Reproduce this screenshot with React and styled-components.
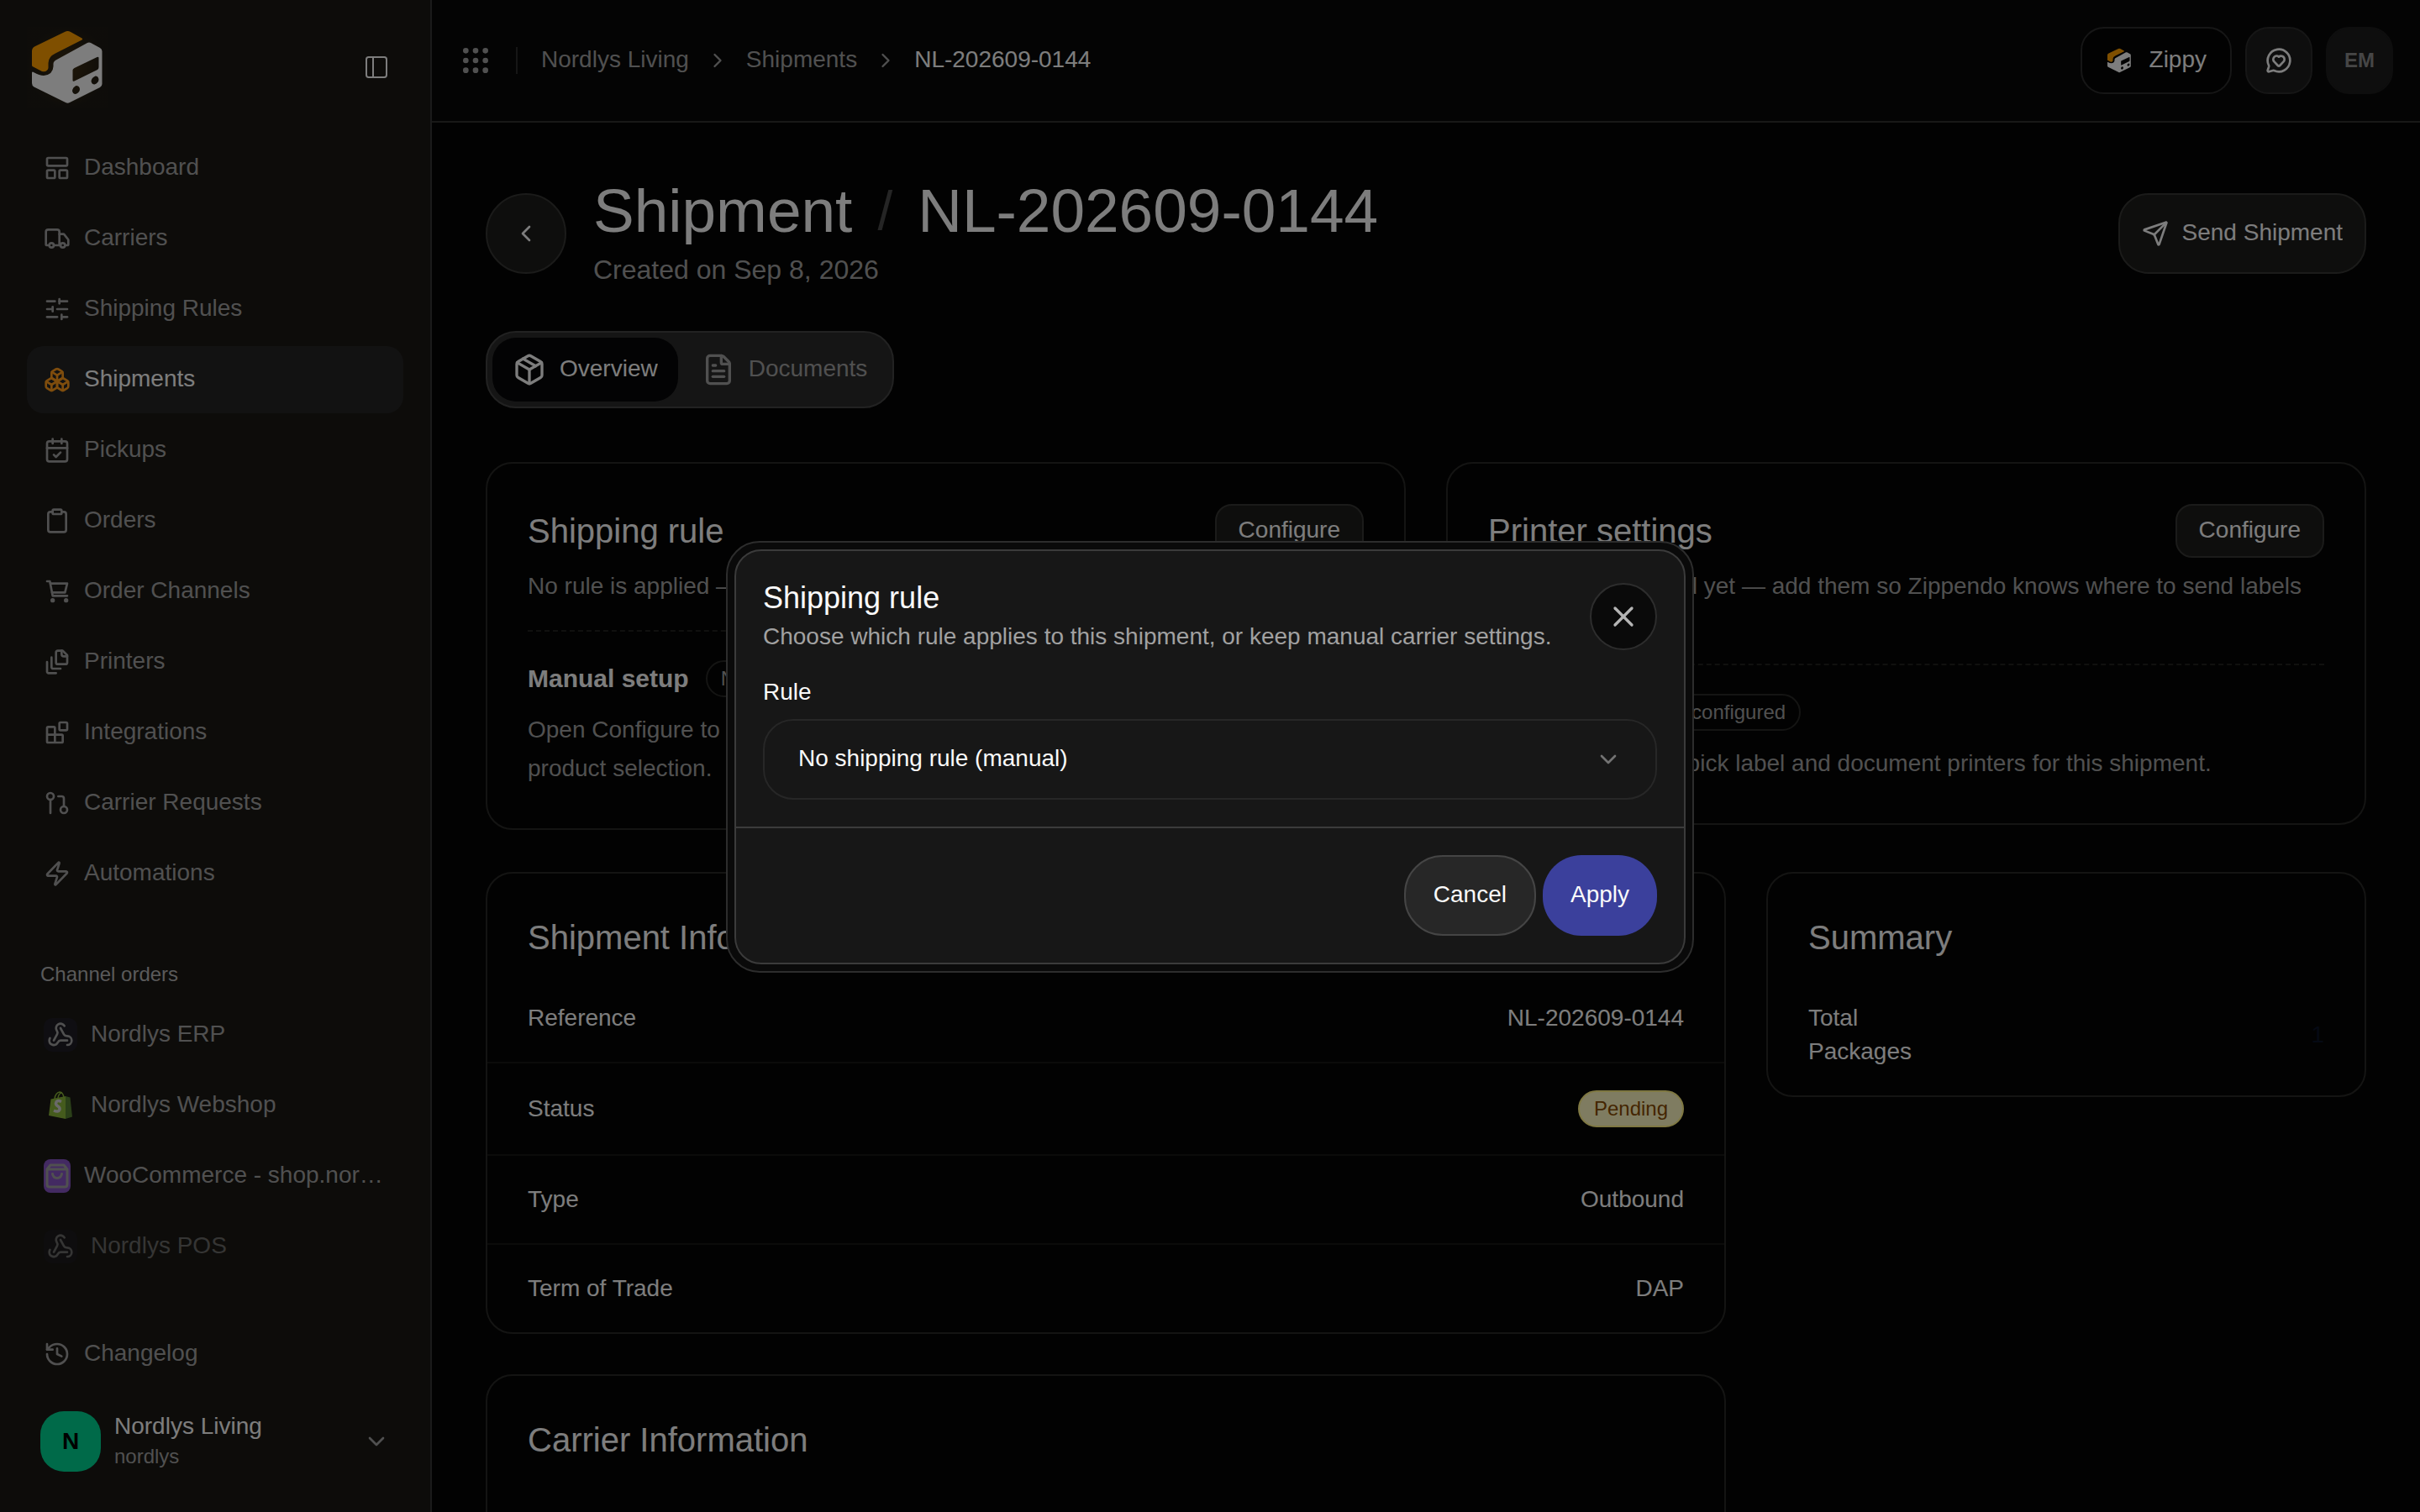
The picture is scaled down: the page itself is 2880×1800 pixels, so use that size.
import React from "react";
import styled, { createGlobalStyle } from "styled-components";
import {
  Boxes,
  CalendarCheck,
  ChevronDown,
  ChevronLeft,
  ChevronRight,
  Clipboard,
  FileText,
  GitPullRequest,
  Grip,
  History,
  LayoutPanelTop,
  MessageCircleHeart,
  Package,
  PanelLeft,
  Send,
  SlidersHorizontal,
  Truck,
  Webhook,
  X,
  Zap,
} from "lucide-react";

const GlobalStyle = createGlobalStyle`
  * {
    box-sizing: border-box;
  }
  body {
    margin: 0;
    background-color: #050504;
    color: #fafafa;
    font-family: "Liberation Sans", Arial, sans-serif;
    font-size: 28px;
    line-height: 40px;
  }
  button, select {
    font: inherit;
    color: inherit;
    cursor: pointer;
  }
  a {
    color: inherit;
    text-decoration: none;
  }
  h1, h2, h3, p, ul, ol, dl, dd {
    margin: 0;
    padding: 0;
    font-weight: 400;
  }
  ul, ol {
    list-style: none;
  }
  svg {
    flex: none;
  }
`;

const Layout = styled.div`
  display: flex;
  height: 100vh;
  overflow: hidden;
`;

/* sidebar */
const Sidebar = styled.aside`
  display: flex;
  flex-direction: column;
  flex: none;
  width: 514px;
  border-right: 2px solid #363636;
  background-color: #1a1814;
`;
const SidebarTop = styled.div`
  display: flex;
  align-items: center;
  justify-content: space-between;
  height: 160px;
  padding: 0 40px 0 32px;
`;
const IconButton = styled.button`
  display: flex;
  padding: 8px;
  border: none;
  background: none;
`;
const Nav = styled.nav`
  flex: 1;
  padding: 0 32px;
`;
const NavList = styled.ul`
  display: flex;
  flex-direction: column;
  gap: 4px;
`;
const NavLink = styled.a`
  display: flex;
  align-items: center;
  gap: 16px;
  height: 80px;
  padding: 0 20px;
  border-radius: 20px;
  color: ${({ $active }) => ($active ? "#fafafa" : "#a1a1a1")};
  background-color: ${({ $active }) => ($active ? "#252525" : "transparent")};
  opacity: ${({ $faded }) => ($faded ? 0.6 : 1)};
  svg {
    color: ${({ $active }) => ($active ? "#ff9a1a" : "inherit")};
  }
`;
const Label = styled.span`
  padding-bottom: 2px;
  overflow: hidden;
  text-overflow: ellipsis;
  white-space: nowrap;
`;
const GroupTitle = styled.h3`
  display: flex;
  align-items: center;
  height: 64px;
  margin-top: 48px;
  padding: 0 16px;
  color: #b4b4b4;
  font-size: 24px;
`;
const ChannelIcon = styled.span`
  display: flex;
  flex: none;
  align-items: center;
  justify-content: center;
  width: 40px;
  height: 40px;
  border-radius: 10px;
  background-color: ${({ $color }) => $color || "transparent"};
`;
const SidebarBottom = styled.div`
  padding: 0 32px 48px;
`;
const Workspace = styled.button`
  display: flex;
  align-items: center;
  gap: 16px;
  width: 100%;
  margin-top: 28px;
  padding: 0 16px;
  border: none;
  background: none;
  text-align: left;
`;
const WorkspaceAvatar = styled.span`
  display: flex;
  align-items: center;
  justify-content: center;
  width: 72px;
  height: 72px;
  border-radius: 28px;
  background-color: #00d492;
  color: #000;
  font-weight: 700;
`;
const WorkspaceText = styled.span`
  display: flex;
  flex: 1;
  flex-direction: column;
  line-height: 36px;
`;
const WorkspaceSlug = styled.span`
  color: #a1a1a1;
  font-size: 24px;
`;

/* top bar */
const Main = styled.main`
  flex: 1;
  min-width: 0;
`;
const Topbar = styled.header`
  display: flex;
  align-items: center;
  justify-content: space-between;
  height: 146px;
  padding: 0 32px;
  border-bottom: 2px solid #30302e;
  background-color: #080808;
`;
const TopbarLeft = styled.div`
  display: flex;
  align-items: center;
  gap: 28px;
  color: #a1a1a1;
`;
const AppsButton = styled.button`
  display: flex;
  padding: 0;
  border: none;
  background: none;
`;
const Separator = styled.span`
  width: 2px;
  height: 32px;
  background-color: #2c2c2c;
`;
const Breadcrumbs = styled.ol`
  display: flex;
  align-items: center;
  gap: 20px;
`;
const Crumb = styled.li`
  display: flex;
  align-items: center;
  gap: 20px;
  color: ${({ $current }) => ($current ? "#fafafa" : "#a1a1a1")};
`;
const TopbarRight = styled.div`
  display: flex;
  gap: 16px;
`;
const TopButton = styled.button`
  display: flex;
  align-items: center;
  justify-content: center;
  gap: 20px;
  min-width: 80px;
  height: 80px;
  padding: ${({ $wide }) => ($wide ? "0 28px" : "0")};
  border: 2px solid ${({ $plain }) => ($plain ? "#1c1c1c" : "#2c2c2c")};
  border-radius: 28px;
  background-color: ${({ $wide }) => ($wide ? "#050505" : "#1c1c1c")};
`;
const Initials = styled.span`
  color: #8c8c8c;
  font-size: 24px;
  font-weight: 700;
`;

/* page */
const Page = styled.div`
  padding: 64px;
`;
const PageHead = styled.div`
  display: flex;
  align-items: center;
  gap: 32px;
  height: 136px;
`;
const BackButton = styled.button`
  display: flex;
  align-items: center;
  justify-content: center;
  width: 96px;
  height: 96px;
  border: 2px solid #363634;
  border-radius: 50%;
  background-color: #1c1c1a;
`;
const PageTitle = styled.div`
  flex: 1;
`;
const Title = styled.h1`
  display: flex;
  align-items: center;
  gap: 30px;
  font-size: 73px;
  line-height: 80px;
`;
const Slash = styled.span`
  color: #4a4a4a;
  font-size: 64px;
`;
const Created = styled.p`
  padding-top: 6px;
  color: #a1a1a1;
  font-size: 32px;
  line-height: 48px;
`;
const Button = styled.button`
  display: flex;
  flex: none;
  align-items: center;
  justify-content: center;
  gap: 16px;
  height: ${({ $small }) => ($small ? "64px" : "96px")};
  padding: 0 26px;
  border: 2px solid #363634;
  border-radius: ${({ $small }) => ($small ? "20px" : "36px")};
  background-color: #1c1c1a;
`;
const Tabs = styled.div`
  display: inline-flex;
  gap: 4px;
  margin: 48px 0 64px;
  padding: 6px;
  border: 2px solid #444;
  border-radius: 36px;
  background-color: #2b2b2b;
`;
const Tab = styled.button`
  display: flex;
  align-items: center;
  gap: 16px;
  height: 76px;
  padding: 0 24px;
  border: none;
  border-radius: 28px;
  color: ${({ $active }) => ($active ? "#fafafa" : "#a1a1a1")};
  background-color: ${({ $active }) => ($active ? "#070708" : "transparent")};
`;
const Grid = styled.div`
  display: grid;
  grid-template-columns: repeat(${({ $columns }) => $columns}, minmax(0, 1fr));
  gap: 48px;
  align-items: start;
  margin-bottom: 50px;
`;
const Column = styled.div`
  display: flex;
  grid-column: span 2;
  flex-direction: column;
  gap: 48px;
`;
const Card = styled.section`
  min-height: 240px;
  border: 2px solid #292927;
  border-radius: 32px;
`;
const PaddedCard = styled(Card)`
  padding: 48px;
`;
const CardHead = styled.div`
  display: flex;
  align-items: center;
  justify-content: space-between;
  min-height: 64px;
`;
const CardTitle = styled.h2`
  font-size: 40px;
  line-height: 56px;
`;
const CardText = styled.p`
  padding: 14px 0 32px;
  border-bottom: 2px dashed #21211f;
  color: #a1a1a1;
`;
const SetupRow = styled.div`
  display: flex;
  align-items: center;
  gap: 20px;
  height: 48px;
  margin: 32px 0 14px;
`;
const SetupTitle = styled.h3`
  font-size: 30px;
  font-weight: 700;
`;
const Pill = styled.span`
  height: 44px;
  padding: 0 16px;
  border: 2px solid #292927;
  border-radius: 22px;
  color: #a1a1a1;
  font-size: 24px;
`;
const SetupText = styled.p`
  color: #a1a1a1;
  line-height: 46px;
`;
const InfoHead = styled.div`
  padding: 48px 48px 16px;
`;
const InfoRow = styled.div`
  display: flex;
  align-items: center;
  justify-content: space-between;
  padding: 32px 48px;
  border-bottom: 2px solid #161615;
  &:last-child {
    border-bottom: none;
  }
`;
const InfoLabel = styled.dt`
  max-width: 160px;
  white-space: ${({ $wrap }) => ($wrap ? "normal" : "nowrap")};
`;
const Count = styled.dd`
  color: #0a1226;
`;
const Status = styled.dd`
  height: 44px;
  padding: 0 17px;
  border: 2px solid #fff085;
  border-radius: 22px;
  background-color: #fef9c2;
  color: #894b00;
  font-size: 24px;
`;

/* dialog */
const Overlay = styled.div`
  position: fixed;
  inset: 0;
  display: flex;
  align-items: center;
  justify-content: center;
  padding-top: 2px;
  background-color: rgba(0, 0, 0, 0.5);
`;
const DialogFrame = styled.div`
  width: 1152px;
  padding: 8px;
  border: 2px solid #2d2d2d;
  border-radius: 40px;
  background-color: #0a0a0a;
`;
const Dialog = styled.div`
  border: 2px solid #3b3b3b;
  border-radius: 32px;
  background-color: #171717;
`;
const DialogBody = styled.div`
  padding: 32px;
`;
const DialogHead = styled.div`
  display: flex;
  align-items: center;
  justify-content: space-between;
`;
const DialogTitle = styled.h2`
  font-size: 36px;
  line-height: 48px;
`;
const DialogText = styled.p`
  color: #a1a1a1;
  line-height: 44px;
`;
const CloseButton = styled.button`
  display: flex;
  flex: none;
  align-items: center;
  justify-content: center;
  width: 80px;
  height: 80px;
  padding: 0;
  border: 2px solid #2d2d2d;
  border-radius: 50%;
  background-color: #0a0a0a;
  color: #b5b5b5;
`;
const FieldLabel = styled.label`
  display: block;
  margin: 24px 0 12px;
`;
const SelectBox = styled.div`
  display: grid;
  align-items: center;
  color: #737373;
  > * {
    grid-area: 1 / 1;
  }
  svg {
    justify-self: end;
    margin-right: 42px;
    pointer-events: none;
  }
`;
const Select = styled.select`
  width: 100%;
  height: 96px;
  padding: 0 40px 2px;
  border: 2px solid #272727;
  border-radius: 36px;
  background-color: #171717;
  color: #fafafa;
  appearance: none;
`;
const DialogFoot = styled.div`
  display: flex;
  justify-content: flex-end;
  gap: 8px;
  padding: 32px;
  border-top: 2px solid #3b3b3b;
`;
const DialogButton = styled.button`
  height: 96px;
  padding: 0 33px 2px;
  border: ${({ $primary }) => ($primary ? "none" : "2px solid #454545")};
  border-radius: 46px;
  background-color: ${({ $primary }) => ($primary ? "#3b409c" : "#272727")};
`;

function Logo({ size, glow }) {
  return (
    <svg width={size} height={size} viewBox="0 0 96 96" aria-hidden="true">
      {glow && (
        <>
          <defs>
            <radialGradient id="glow">
              <stop offset="0" stopColor="#ff9f00" stopOpacity="0.16" />
              <stop offset="1" stopColor="#ff9f00" stopOpacity="0.01" />
            </radialGradient>
          </defs>
          <rect width="96" height="96" fill="url(#glow)" />
        </>
      )}
      <path
        fill="#ff9f00"
        d="M6 29q0-4 3-5.500L45 6q3.500-2 7 0l13.500 7.500q1.500 1 0 2L34 31.500q-8.500 4-8.500 11.500v6q-1 5-7.500 4L6.500 47Q6 46.500 6 45Z"
      />
      <path
        fill="#fafafa"
        fillRule="evenodd"
        d="M6 54.500q.500-1.500 2-.500 7 4 12 4 11-1 11.500-11v-3q0-3 4-5L72 19q2-1 4 0l11 6q2.500 1.500 2.500 4v39q0 2.500-2.500 4L51 90q-2.500 1.500-5 0L8.500 71.500Q6 70 6 67ZM54.500 51.500v12q0 2 2 1L84 51q1.500-1 1.500-3V37q0-2-2-1L56.500 49q-2 1-2 2.500ZM58.500 70q-4 2-4.500 6 .500 4 4 4 5-2 5-6-.500-4-4.500-4ZM81.500 58.500q-4.500 2-5 6 .500 4 4 4 5-2 5-6-.500-4-4-4Z"
      />
    </svg>
  );
}

function IconBase({ children }) {
  return (
    <svg
      width="32"
      height="32"
      viewBox="0 0 24 24"
      fill="none"
      stroke="currentColor"
      strokeWidth="2"
      strokeLinecap="round"
      strokeLinejoin="round"
      aria-hidden="true"
    >
      {children}
    </svg>
  );
}

function CartIcon() {
  return (
    <IconBase>
      <path d="M3 3h2.500l2.500 13h13" />
      <path d="M6 5h15l-2 8H7.500" />
      <circle cx="8" cy="20" r="1" />
      <circle cx="20" cy="20" r="1" />
    </IconBase>
  );
}

function FilesIcon() {
  return (
    <IconBase>
      <path d="M21 7h-3a2 2 0 0 1-2-2V2" />
      <path d="M21 6v6.500c0 .8-.7 1.500-1.500 1.500h-7c-.8 0-1.500-.7-1.500-1.500v-9c0-.8.7-1.500 1.500-1.500H17Z" />
      <path d="M7 8v8.800c0 .3.200.6.400.8.200.2.500.4.800.4H15" />
      <path d="M3 12v8.800c0 .3.200.6.400.8.200.2.500.4.800.4H11" />
    </IconBase>
  );
}

function BlocksIcon() {
  return (
    <IconBase>
      <rect width="7" height="7" x="14" y="3" rx="1" />
      <path d="M10 21V8a1 1 0 0 0-1-1H4a1 1 0 0 0-1 1v12a1 1 0 0 0 1 1h12a1 1 0 0 0 1-1v-5a1 1 0 0 0-1-1H3" />
    </IconBase>
  );
}

function ShopifyIcon() {
  return (
    <svg width="40" height="40" viewBox="0 0 40 40" aria-hidden="true">
      <path
        d="M13 12q1-7 6-8 4 0 5 7M17 11q1-6 5-6"
        fill="none"
        stroke="#8bb63a"
        strokeWidth="1.500"
      />
      <path d="M8.500 12.500 26 9v27L6 32Z" fill="#8bb63a" />
      <path d="m26 9 5.500 1.500L34 33.500 26 36Z" fill="#568033" />
      <path
        d="M21 15.500q-6-2.500-6.500 2 0 2 2.500 3.500t2 4q-1.500 3.500-7 1"
        fill="none"
        stroke="#d4d4d4"
        strokeWidth="3.500"
      />
    </svg>
  );
}

function WooIcon() {
  return (
    <svg
      width="32"
      height="40"
      viewBox="0 0 32 40"
      fill="none"
      stroke="currentColor"
      strokeWidth="3"
      strokeLinejoin="round"
      strokeLinecap="round"
      aria-hidden="true"
    >
      <rect width="32" height="40" rx="8" fill="#8654c4" stroke="none" />
      <path d="M4 12 8 7h16l4 5v18q0 3-3 3H7q-3 0-3-3ZM4 12h24M10.500 17.500q1 5 5.500 5t5.500-5" />
    </svg>
  );
}

function WebhookIcon() {
  return (
    <ChannelIcon $color="#1e1c24">
      <Webhook size={32} />
    </ChannelIcon>
  );
}

const navItems = [
  { label: "Dashboard", icon: <LayoutPanelTop size={32} /> },
  { label: "Carriers", icon: <Truck size={32} /> },
  { label: "Shipping Rules", icon: <SlidersHorizontal size={32} /> },
  { label: "Shipments", icon: <Boxes size={32} />, active: true },
  { label: "Pickups", icon: <CalendarCheck size={32} /> },
  { label: "Orders", icon: <Clipboard size={32} /> },
  { label: "Order Channels", icon: <CartIcon /> },
  { label: "Printers", icon: <FilesIcon /> },
  { label: "Integrations", icon: <BlocksIcon /> },
  { label: "Carrier Requests", icon: <GitPullRequest size={32} /> },
  { label: "Automations", icon: <Zap size={32} /> },
];

const channels = [
  { label: "Nordlys ERP", icon: <WebhookIcon /> },
  {
    label: "Nordlys Webshop",
    icon: (
      <ChannelIcon>
        <ShopifyIcon />
      </ChannelIcon>
    ),
  },
  { label: "WooCommerce - shop.nordlys.com", icon: <WooIcon /> },
  { label: "Nordlys POS", icon: <WebhookIcon />, faded: true },
];

function NavItems({ items }) {
  return (
    <NavList>
      {items.map((item) => (
        <li key={item.label}>
          <NavLink href="#" $active={item.active} $faded={item.faded}>
            {item.icon}
            <Label>{item.label}</Label>
          </NavLink>
        </li>
      ))}
    </NavList>
  );
}

function AppSidebar() {
  return (
    <Sidebar>
      <SidebarTop>
        <Logo size={96} glow />
        <IconButton aria-label="Toggle sidebar">
          <PanelLeft size={32} strokeWidth={1.5} />
        </IconButton>
      </SidebarTop>
      <Nav>
        <NavItems items={navItems} />
        <GroupTitle>Channel orders</GroupTitle>
        <NavItems items={channels} />
      </Nav>
      <SidebarBottom>
        <NavLink href="#">
          <History size={32} />
          <Label>Changelog</Label>
        </NavLink>
        <Workspace>
          <WorkspaceAvatar>N</WorkspaceAvatar>
          <WorkspaceText>
            <span>Nordlys Living</span>
            <WorkspaceSlug>nordlys</WorkspaceSlug>
          </WorkspaceText>
          <ChevronDown size={32} color="#a1a1a1" />
        </Workspace>
      </SidebarBottom>
    </Sidebar>
  );
}

function AppTopbar() {
  return (
    <Topbar>
      <TopbarLeft>
        <AppsButton aria-label="Apps">
          <Grip size={40} color="#a1a1a1" />
        </AppsButton>
        <Separator />
        <Breadcrumbs>
          <Crumb>
            <Label as="a" href="#">
              Nordlys Living
            </Label>
            <ChevronRight size={28} />
          </Crumb>
          <Crumb>
            <Label as="a" href="#">
              Shipments
            </Label>
            <ChevronRight size={28} />
          </Crumb>
          <Crumb $current>
            <Label>NL-202609-0144</Label>
          </Crumb>
        </Breadcrumbs>
      </TopbarLeft>
      <TopbarRight>
        <TopButton $wide>
          <Logo size={32} />
          <Label>Zippy</Label>
        </TopButton>
        <TopButton aria-label="Feedback">
          <MessageCircleHeart size={32} />
        </TopButton>
        <TopButton $plain>
          <Initials>EM</Initials>
        </TopButton>
      </TopbarRight>
    </Topbar>
  );
}

function SetupCard({ title, text, setup, status, hint }) {
  return (
    <PaddedCard>
      <CardHead>
        <CardTitle>{title}</CardTitle>
        <Button $small>
          <Label>Configure</Label>
        </Button>
      </CardHead>
      <CardText>{text}</CardText>
      <SetupRow>
        <SetupTitle>{setup}</SetupTitle>
        <Pill>{status}</Pill>
      </SetupRow>
      <SetupText>{hint}</SetupText>
    </PaddedCard>
  );
}

function ShippingRuleDialog() {
  return (
    <Overlay>
      <DialogFrame>
        <Dialog role="dialog" aria-modal="true" aria-labelledby="dialog-title">
          <DialogBody>
            <DialogHead>
              <div>
                <DialogTitle id="dialog-title">Shipping rule</DialogTitle>
                <DialogText>
                  Choose which rule applies to this shipment, or keep manual
                  carrier settings.
                </DialogText>
              </div>
              <CloseButton aria-label="Close">
                <X size={40} />
              </CloseButton>
            </DialogHead>
            <FieldLabel htmlFor="rule">Rule</FieldLabel>
            <SelectBox>
              <Select id="rule">
                <option>No shipping rule (manual)</option>
              </Select>
              <ChevronDown size={32} />
            </SelectBox>
          </DialogBody>
          <DialogFoot>
            <DialogButton>Cancel</DialogButton>
            <DialogButton $primary>Apply</DialogButton>
          </DialogFoot>
        </Dialog>
      </DialogFrame>
    </Overlay>
  );
}

function App() {
  return (
    <>
      <GlobalStyle />
      <Layout>
        <AppSidebar />
        <Main>
          <AppTopbar />
          <Page>
            <PageHead>
              <BackButton aria-label="Back">
                <ChevronLeft size={32} />
              </BackButton>
              <PageTitle>
                <Title>
                  Shipment <Slash>/</Slash> NL-202609-0144
                </Title>
                <Created>Created on Sep 8, 2026</Created>
              </PageTitle>
              <Button>
                <Send size={32} />
                <Label>Send Shipment</Label>
              </Button>
            </PageHead>
            <Tabs role="tablist">
              <Tab role="tab" aria-selected="true" $active>
                <Package size={40} />
                <Label>Overview</Label>
              </Tab>
              <Tab role="tab" aria-selected="false">
                <FileText size={40} />
                <Label>Documents</Label>
              </Tab>
            </Tabs>
            <Grid $columns={2}>
              <SetupCard
                title="Shipping rule"
                text="No rule is applied — carrier and product are set manually."
                setup="Manual setup"
                status="No rule"
                hint="Open Configure to pick a shipping rule, or keep using the manual carrier and product selection."
              />
              <SetupCard
                title="Printer settings"
                text="No printers selected yet — add them so Zippendo knows where to send labels and documents."
                setup="No printers"
                status="Not configured"
                hint="Open Configure to pick label and document printers for this shipment."
              />
            </Grid>
            <Grid $columns={3}>
              <Column>
                <Card>
                  <InfoHead>
                    <CardTitle>Shipment Information</CardTitle>
                  </InfoHead>
                  <dl>
                    <InfoRow>
                      <InfoLabel>Reference</InfoLabel>
                      <dd>NL-202609-0144</dd>
                    </InfoRow>
                    <InfoRow>
                      <InfoLabel>Status</InfoLabel>
                      <Status>Pending</Status>
                    </InfoRow>
                    <InfoRow>
                      <InfoLabel>Type</InfoLabel>
                      <dd>Outbound</dd>
                    </InfoRow>
                    <InfoRow>
                      <InfoLabel>Term of Trade</InfoLabel>
                      <dd>DAP</dd>
                    </InfoRow>
                  </dl>
                </Card>
                <Card>
                  <InfoHead>
                    <CardTitle>Carrier Information</CardTitle>
                  </InfoHead>
                </Card>
              </Column>
              <Card>
                <InfoHead>
                  <CardTitle>Summary</CardTitle>
                </InfoHead>
                <dl>
                  <InfoRow>
                    <InfoLabel $wrap>Total Packages</InfoLabel>
                    <Count>1</Count>
                  </InfoRow>
                </dl>
              </Card>
            </Grid>
          </Page>
        </Main>
      </Layout>
      <ShippingRuleDialog />
    </>
  );
}

export default App;
